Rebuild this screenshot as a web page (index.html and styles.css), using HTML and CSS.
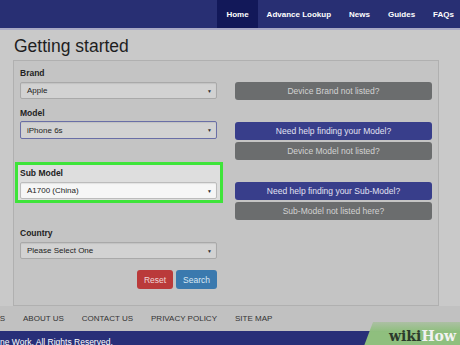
FILE: index.html
```html
<!DOCTYPE html>
<html lang="en">
<head>
    <meta charset="UTF-8">
    <meta name="viewport" content="width=device-width, initial-scale=1.0">
    <title>Getting started</title>
    <link rel="stylesheet" href="styles.css">
</head>
<body>
    <nav class="topnav">
        <a class="active" href="#">Home</a>
        <a href="#">Advance Lookup</a>
        <a href="#">News</a>
        <a href="#">Guides</a>
        <a href="#">FAQs</a>
    </nav>

    <div class="page">
        <h1>Getting started</h1>

        <div class="lookup-panel">
            <div class="form-row">
                <div class="field">
                    <label>Brand</label>
                    <div class="select"><span>Apple</span><span class="arrow">&#9660;</span></div>
                </div>
                <div class="side">
                    <button class="btn-grey">Device Brand not listed?</button>
                </div>
            </div>

            <div class="form-row">
                <div class="field">
                    <label>Model</label>
                    <div class="select focused"><span>iPhone 6s</span><span class="arrow">&#9660;</span></div>
                </div>
                <div class="side">
                    <button class="btn-blue">Need help finding your Model?</button>
                    <button class="btn-grey">Device Model not listed?</button>
                </div>
            </div>

            <div class="form-row">
                <div class="field highlight">
                    <label>Sub Model</label>
                    <div class="select bright"><span>A1700 (China)</span><span class="arrow">&#9660;</span></div>
                </div>
                <div class="side">
                    <button class="btn-blue">Need help finding your Sub-Model?</button>
                    <button class="btn-grey">Sub-Model not listed here?</button>
                </div>
            </div>

            <div class="form-row">
                <div class="field">
                    <label>Country</label>
                    <div class="select"><span>Please Select One</span><span class="arrow">&#9660;</span></div>
                </div>
            </div>

            <div class="actions">
                <button class="btn-reset">Reset</button>
                <button class="btn-search">Search</button>
            </div>
        </div>
    </div>

    <footer>
        <div class="footer-links">
            <a href="#">TERMS</a>
            <a href="#">ABOUT US</a>
            <a href="#">CONTACT US</a>
            <a href="#">PRIVACY POLICY</a>
            <a href="#">SITE MAP</a>
        </div>
        <div class="copyright">
            <p>ne Work. All Rights Reserved.</p>
            <!-- watermark -->
            <div class="wikihow"><span class="wiki">wiki</span><span class="how">How</span></div>
        </div>
    </footer>
</body>
</html>
```

FILE: styles.css
```css
body {
    margin: 0;
    font-family: "Liberation Sans", Arial, sans-serif;
    background-color: #c9c9c9;
    color: #222;
    width: 460px;
    height: 345px;
    overflow: hidden;
}
.topnav {
    display: flex;
    justify-content: flex-end;
    height: 28px;
    background-color: #282f73;
    border-bottom: 2px solid #a9a9c4;
    margin-right: -3px;
}
.topnav a {
    display: flex;
    align-items: center;
    padding: 0 9px;
    color: #fff;
    font-size: 8px;
    font-weight: bold;
    text-decoration: none;
}
.topnav a.active {
    background-color: #121859;
}
.page {
    padding: 0 21px 0 13px;
}
.page h1 {
    margin: 5px 0 3px 1px;
    font-size: 17.5px;
    line-height: 22px;
    font-weight: normal;
    color: #1e1e1e;
}
.lookup-panel {
    background-color: #c4c4c4;
    border: 1px solid #b0b0b0;
    padding: 7px 6px 16px 6px;
    display: flex;
    flex-direction: column;
    gap: 8px;
    height: 221px;
}
.form-row {
    display: grid;
    grid-template-columns: 197px 197px;
    column-gap: 18px;
    align-items: start;
}
.field label {
    display: block;
    font-size: 8.5px;
    font-weight: bold;
    line-height: 10px;
    margin-bottom: 4px;
    color: #222;
}
.select {
    display: flex;
    justify-content: space-between;
    align-items: center;
    height: 17px;
    box-sizing: border-box;
    padding: 0 4px 0 6px;
    background-color: #d2d2d2;
    border: 1px solid #a9a9a9;
    border-radius: 2px;
    box-shadow: inset 0 1px 1px rgba(0, 0, 0, 0.08);
    font-size: 8px;
    color: #222;
}
.select .arrow {
    font-size: 5px;
    color: #333;
}
.select.focused {
    height: 18px;
    margin-top: -1px;
    border-color: #6a6fa6;
}
.select.bright {
    background-color: #f6f6f6;
    border-color: #bcbcbc;
}
.highlight {
    margin: -6px -6px -4px -5px;
    padding: 3px 3px 1px 2px;
    border: 3px solid #3ee43a;
    background-color: #dedede;
}
.side {
    display: flex;
    flex-direction: column;
    gap: 2px;
    padding-top: 14px;
}
.side button {
    height: 18px;
    border: none;
    border-radius: 3px;
    font-family: "Liberation Sans", Arial, sans-serif;
    font-size: 8.5px;
    padding: 0;
}
.btn-grey {
    background-color: #6b6d6e;
    color: #d2d2d2;
}
.btn-blue {
    background-color: #383e8b;
    color: #e2e2f2;
}
.actions {
    width: 197px;
    display: flex;
    justify-content: flex-end;
    gap: 3px;
    margin-top: 3px;
}
.actions button {
    height: 19px;
    border: none;
    border-radius: 3px;
    font-family: "Liberation Sans", Arial, sans-serif;
    font-size: 8.5px;
    padding: 0;
}
.btn-reset {
    width: 36px;
    background-color: #ba3a3a;
    color: #f0d8d8;
}
.btn-search {
    width: 41px;
    background-color: #3a79ae;
    color: #dbe8f4;
}
footer {
    position: relative;
}
.footer-links {
    display: flex;
    gap: 18px;
    height: 25px;
    align-items: center;
    background-color: #c1c1c1;
    margin-left: -23px;
}
.footer-links a {
    color: #333;
    font-size: 8px;
    text-decoration: none;
}
.copyright {
    height: 15px;
    background-color: #282f78;
    overflow: hidden;
}
.copyright p {
    margin: 0;
    padding-top: 6px;
    font-size: 8.5px;
    color: #fff;
}
.wikihow {
    position: absolute;
    right: 0;
    bottom: 0;
    width: 96px;
    height: 24px;
    background: linear-gradient(to bottom, rgba(140, 190, 120, 0.4), #8fbf7e 40%);
    clip-path: polygon(9px 0, 100% 0, 100% 100%, 0 100%);
    display: flex;
    align-items: flex-end;
    justify-content: flex-end;
    padding-right: 4px;
    box-sizing: border-box;
    font-family: "DejaVu Serif", "Liberation Serif", serif;
    font-weight: bold;
    font-size: 14px;
    line-height: 19px;
}
.wiki {
    color: #2c3a2c;
}
.how {
    color: #f2f2f2;
}
```
